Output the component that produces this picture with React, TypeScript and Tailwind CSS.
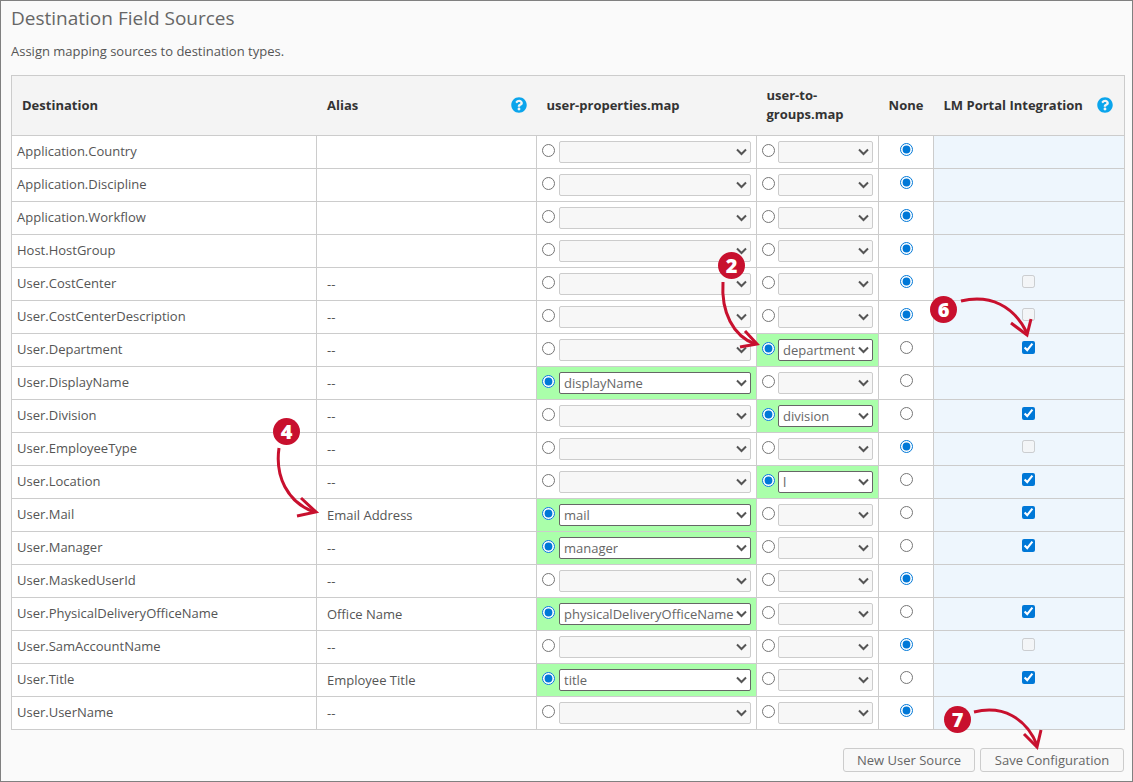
import React from "react";
import { FaQuestionCircle } from "react-icons/fa";

type Row = { d: string; a?: string; p?: string; g?: string; lm?: "on" | "off" | "none" };
const rows: Row[] = [
  { d: "Application.Country", lm: "none" },
  { d: "Application.Discipline", lm: "none" },
  { d: "Application.Workflow", lm: "none" },
  { d: "Host.HostGroup", lm: "none" },
  { d: "User.CostCenter", a: "--", lm: "off" },
  { d: "User.CostCenterDescription", a: "--", lm: "off" },
  { d: "User.Department", a: "--", g: "department", lm: "on" },
  { d: "User.DisplayName", a: "--", p: "displayName", lm: "none" },
  { d: "User.Division", a: "--", g: "division", lm: "on" },
  { d: "User.EmployeeType", a: "--", lm: "off" },
  { d: "User.Location", a: "--", g: "l", lm: "on" },
  { d: "User.Mail", a: "Email Address", p: "mail", lm: "on" },
  { d: "User.Manager", a: "--", p: "manager", lm: "on" },
  { d: "User.MaskedUserId", a: "--", lm: "none" },
  { d: "User.PhysicalDeliveryOfficeName", a: "Office Name", p: "physicalDeliveryOfficeName", lm: "on" },
  { d: "User.SamAccountName", a: "--", lm: "off" },
  { d: "User.Title", a: "Employee Title", p: "title", lm: "on" },
  { d: "User.UserName", a: "--", lm: "none" },
];

function Radio({ on }: { on: boolean }) {
  return <input type="radio" checked={on} readOnly className="m-0 h-[13px] w-[13px] shrink-0 accent-[#0078d7]" />;
}

function Sel({ value }: { value?: string }) {
  const on = !!value;
  return (
    <div
      className={
        "flex h-[22px] min-w-0 flex-1 items-center justify-between rounded-[2px] border pl-1 pr-[3px] text-[13px] " +
        (on ? "border-[#666666] bg-white text-[#666666]" : "border-[#cccccc] bg-[#f7f7f7] text-[#666666]")
      }
    >
      <span className="overflow-hidden whitespace-nowrap pt-[2px]">{value}</span>
      <svg width="11" height="8" viewBox="0 0 11 8" className="ml-px shrink-0">
        <path d="M1 1.5 L5.5 6 L10 1.5" fill="none" stroke="#555555" strokeWidth="2" />
      </svg>
    </div>
  );
}

function Help() {
  return <FaQuestionCircle size={16} color="#0ba5ec" />;
}

function Badge({ n, cls }: { n: string; cls: string }) {
  return (
    <div
      className={
        "absolute flex h-[27px] w-[27px] items-center justify-center rounded-full bg-[#c8102e] text-[20px] font-extrabold text-white " +
        cls
      }
    >
      {n}
    </div>
  );
}

export default function App() {
  const th = "border border-[#cccccc] border-x-0 pb-[1px] align-middle font-bold text-[13px] text-[#333333] leading-[19px]";
  const td = "h-[33px] border border-[#cccccc] p-0 text-[13px] text-[#555555]";
  const btn = "h-[24px] rounded-[3px] border border-[#cccccc] bg-[#f8f8f8] pt-[1px] text-[13px] text-[#666666]";
  return (
    <div className="relative h-[782px] w-[1133px] overflow-hidden border border-[#808080] bg-[#fafafa] font-['Open_Sans',sans-serif]">
      <div className="pl-[10px] pr-[8px]">
        <h1 className="pt-[4px] text-[19px] leading-[26px] text-[#666666]">Destination Field Sources</h1>
        <p className="mt-[11px] text-[13px] leading-[18px] text-[#555555]">Assign mapping sources to destination types.</p>
        <table className="mt-[15px] w-[1113px] table-fixed border-collapse bg-white">
          <colgroup>
            <col className="w-[305px]" />
            <col className="w-[220px]" />
            <col className="w-[220px]" />
            <col className="w-[122px]" />
            <col className="w-[55px]" />
            <col className="w-[191px]" />
          </colgroup>
          <thead>
            <tr className="h-[60px] bg-[#f4f4f4]">
              <th className={th + " border-l pl-[10px] text-left"}>Destination</th>
              <th className={th + " pl-[10.5px] text-left"}>
                <div className="flex items-center justify-between pr-[10px]">
                  <span>Alias</span>
                  <Help />
                </div>
              </th>
              <th className={th + " pl-[10px] text-left"}>user-properties.map</th>
              <th className={th + " pl-[10px] pr-[20px] text-left"}>user-to-groups.map</th>
              <th className={th + " text-center"}>None</th>
              <th className={th + " border-r pl-[10px] text-left"}>
                <div className="flex items-center justify-between pr-[11px]">
                  <span className="whitespace-nowrap">LM Portal Integration</span>
                  <Help />
                </div>
              </th>
            </tr>
          </thead>
          <tbody>
            {rows.map((r) => (
              <tr key={r.d}>
                <td className={td + " pl-[5px]"}>{r.d}</td>
                <td className={td + " pl-[10px] pt-[2px]"}>{r.a}</td>
                <td className={td + (r.p ? " bg-[#aaffaa]" : "")}>
                  <div className="flex items-center gap-[4px] pl-[5px] pr-[5px]">
                    <div className="-mt-[3px] flex"><Radio on={!!r.p} /></div>
                    <Sel value={r.p} />
                  </div>
                </td>
                <td className={td + (r.g ? " bg-[#aaffaa]" : "")}>
                  <div className="flex items-center gap-[3px] pl-[5px] pr-[5px]">
                    <div className="-mt-[3px] flex"><Radio on={!!r.g} /></div>
                    <Sel value={r.g} />
                  </div>
                </td>
                <td className={td}>
                  <div className="-mt-[5px] flex justify-center">
                    <Radio on={!r.p && !r.g} />
                  </div>
                </td>
                <td className={td + " bg-[#eef6fd]"}>
                  <div className="-mt-[5px] flex justify-center pr-[2px]">
                    {r.lm !== "none" && (
                      <input
                        type="checkbox"
                        checked={r.lm === "on"}
                        disabled={r.lm === "off"}
                        readOnly
                        className="m-0 h-[13px] w-[13px] accent-[#0078d7]"
                      />
                    )}
                  </div>
                </td>
              </tr>
            ))}
          </tbody>
        </table>
        <div className="mt-[18px] flex justify-end gap-[5px]">
          <button className={btn + " w-[132px]"}>New User Source</button>
          <button className={btn + " w-[144px]"}>Save Configuration</button>
        </div>
      </div>

      <svg className="pointer-events-none absolute -left-px -top-px" width="1133" height="782" fill="none" stroke="#c8102e" strokeWidth="3">
        <path d="M723 282 C721 312 733 336 755 344" />
        <path d="M745 331 L757 344 L740 347" />
        <path d="M961 301 C990 294 1014 306 1027 333" />
        <path d="M1031 319 L1027 335 L1011 323" />
        <path d="M279 448 C275 476 287 502 314 512" />
        <path d="M301 498 L316 512 L297 516" />
        <path d="M974 712 C1003 705 1026 718 1037 745" />
        <path d="M1041 730 L1037 747 L1024 734" />
      </svg>
      <Badge n="2" cls="left-[717px] top-[251px]" />
      <Badge n="6" cls="left-[929px] top-[295px]" />
      <Badge n="4" cls="left-[272px] top-[417px]" />
      <Badge n="7" cls="left-[943px] top-[705px]" />
    </div>
  );
}
